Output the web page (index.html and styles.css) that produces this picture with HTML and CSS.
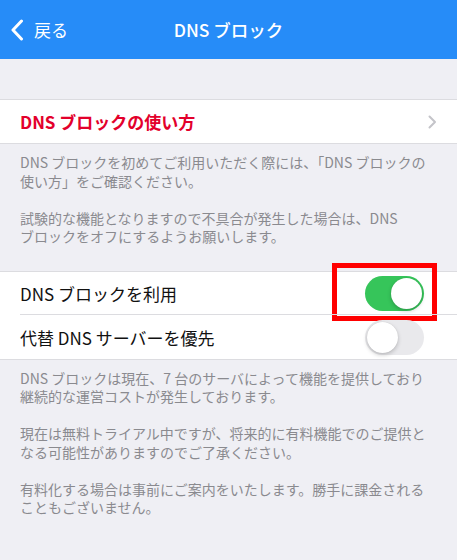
FILE: index.html
```html
<!DOCTYPE html>
<html lang="ja">
<head>
    <meta charset="UTF-8">
    <meta name="viewport" content="width=device-width, initial-scale=1.0">
    <title>DNSブロック</title>
    <link rel="stylesheet" href="styles.css">
</head>
<body>
    <div class="navbar">
        <a class="back" href="#">
            <svg class="back-icon" width="14" height="22" viewBox="0 0 14 22"><path d="M11.5 2 L3 11 L11.5 20" fill="none" stroke="#fff" stroke-width="3" stroke-linecap="round" stroke-linejoin="round"/></svg>
            <span>戻る</span>
        </a>
        <div class="title">DNS ブロック</div>
    </div>

    <div class="group first">
        <div class="row">
            <span class="link-label">DNS ブロックの使い方</span>
            <svg class="chevron" width="9" height="14" viewBox="0 0 9 14"><path d="M1.5 1.5 L7 7 L1.5 12.5" fill="none" stroke="#c4c4c9" stroke-width="2" stroke-linecap="round" stroke-linejoin="round"/></svg>
        </div>
    </div>
    <div class="note">
        DNS ブロックを初めてご利用いただく際には、「DNS ブロックの使い方」をご確認ください。<br><br>
        試験的な機能となりますので不具合が発生した場合は、DNS<br>ブロックをオフにするようお願いします。
    </div>

    <div class="group">
        <div class="row inset">
            <span>DNS ブロックを利用</span>
            <div class="switch on">
                <div class="knob"></div>
                <div class="highlight"></div>
            </div>
        </div>
        <div class="row">
            <span>代替 DNS サーバーを優先</span>
            <div class="switch">
                <div class="knob"></div>
            </div>
        </div>
    </div>
    <div class="note">
        DNS ブロックは現在、7 台のサーバによって機能を提供しており継続的な運営コストが発生しております。<br><br>
        現在は無料トライアル中ですが、将来的に有料機能でのご提供となる可能性がありますのでご了承ください。<br><br>
        有料化する場合は事前にご案内をいたします。勝手に課金されることもございません。
    </div>
</body>
</html>
```

FILE: styles.css
```css
body { margin: 0; background-color: #efeff4; font-family: "Noto Sans CJK JP", "Noto Sans", sans-serif; color: #111; }

/* ナビゲーションバー */
.navbar { position: relative; height: 59px; background-color: #268cf8; display: flex; align-items: center; justify-content: center; color: white; }
.navbar .title { font-size: 17.5px; font-weight: 500; }
.back { position: absolute; left: 10px; top: 0; bottom: 0; display: flex; align-items: center; gap: 10px; color: white; text-decoration: none; font-size: 17px; }
.back-icon { display: block; }

/* リストのグループ */
.group { background-color: white; border-top: 1px solid #dcdce0; border-bottom: 1px solid #dcdce0; }
.group.first { margin-top: 40px; }
.row { position: relative; height: 43px; padding: 0 20px; display: flex; align-items: center; justify-content: space-between; font-size: 17px; }
.row.inset::after { content: ""; position: absolute; left: 20px; right: 0; bottom: 0; height: 1px; background: #dcdce0; }
.row.inset { height: 43px; border-bottom: 1px solid transparent; }
.link-label { color: #e3002b; font-weight: bold; }
.chevron { display: block; margin-right: 0; }

.note { padding: 9px 20px 25px; font-size: 14px; line-height: 18.5px; color: #8a8a8f; }

/* スイッチ */
.switch { position: relative; width: 59px; height: 35px; margin-right: 13px; border-radius: 18px; background: #e9e9ec; box-sizing: border-box; }
.switch .knob { position: absolute; top: 2px; left: 2px; width: 31px; height: 31px; border-radius: 50%; background: white; box-shadow: 0 2px 4px rgba(0,0,0,0.2), 0 0 1px rgba(0,0,0,0.15); }
.switch.on { background: #36c55a; }
.switch.on .knob { left: 26px; }

/* 赤い枠 */
.switch .highlight { position: absolute; left: -33px; top: -13px; width: 95px; height: 48px; border: 5px solid #ff0000; }
```
